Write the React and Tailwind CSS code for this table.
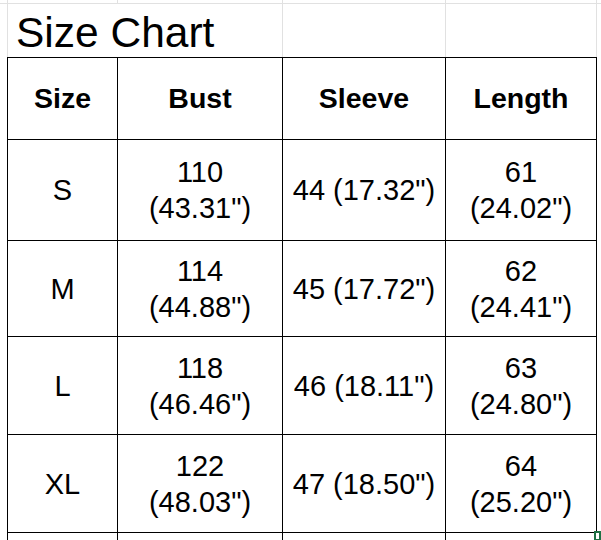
const rows = [
  { size: "S", bust: ["110", '(43.31")'], sleeve: '44 (17.32")', length: ["61", '(24.02")'] },
  { size: "M", bust: ["114", '(44.88")'], sleeve: '45 (17.72")', length: ["62", '(24.41")'] },
  { size: "L", bust: ["118", '(46.46")'], sleeve: '46 (18.11")', length: ["63", '(24.80")'] },
  { size: "XL", bust: ["122", '(48.03")'], sleeve: '47 (18.50")', length: ["64", '(25.20")'] },
];

const Cell = ({ children, bold }) => (
  <div
    className={`bg-white flex flex-col items-center justify-center text-center text-black ${
      bold ? "font-bold text-[28.5px]" : "text-[29px] leading-[36px]"
    }`}
  >
    {children}
  </div>
);

const App = () => {
  return (
    <div className="relative w-[601px] h-[540px] overflow-hidden bg-white font-['Liberation_Sans',Arial,sans-serif]">
      {/* strip above the title row */}
      <div className="flex h-[4px] border-b border-[#e1e1e1]">
        <div className="w-[8px] border-r border-[#e1e1e1]" />
        <div className="w-[110px] border-r border-[#e1e1e1]" />
        <div className="w-[165px] border-r border-[#e1e1e1]" />
        <div className="w-[163px] border-r border-[#e1e1e1]" />
        <div className="w-[151px] border-r border-[#e1e1e1]" />
      </div>

      {/* title row */}
      <div className="flex h-[53px]">
        <div className="w-[8px] border-r border-[#e1e1e1]" />
        <div className="w-[275px] border-r border-[#e1e1e1] flex items-end pl-[8px] pb-[3px]">
          <span className="text-[42.5px] leading-none whitespace-nowrap text-black">Size Chart</span>
        </div>
        <div className="w-[163px] border-r border-[#e1e1e1]" />
        <div className="w-[151px] border-r border-[#e1e1e1]" />
      </div>

      {/* table */}
      <div className="ml-[7px] w-[590px] bg-black p-px grid gap-px grid-cols-[109px_164px_162px_150px] grid-rows-[81px_100px_95px_97px_97px_40px]">
        <Cell bold>Size</Cell>
        <Cell bold>Bust</Cell>
        <Cell bold>Sleeve</Cell>
        <Cell bold>Length</Cell>
        {rows.map((r) => (
          <>
            <Cell key={r.size + "s"}>{r.size}</Cell>
            <Cell key={r.size + "b"}>
              <span>{r.bust[0]}</span>
              <span>{r.bust[1]}</span>
            </Cell>
            <Cell key={r.size + "v"}>{r.sleeve}</Cell>
            <Cell key={r.size + "l"}>
              <span>{r.length[0]}</span>
              <span>{r.length[1]}</span>
            </Cell>
          </>
        ))}
        <div className="bg-white" />
        <div className="bg-white" />
        <div className="bg-white" />
        <div className="bg-white" />
      </div>

      {/* selection fill handle */}
      <div className="absolute left-[594px] top-[531px] w-[7px] h-[10px] border-2 border-[#1e7145] bg-white" />
    </div>
  );
};

export default App;
